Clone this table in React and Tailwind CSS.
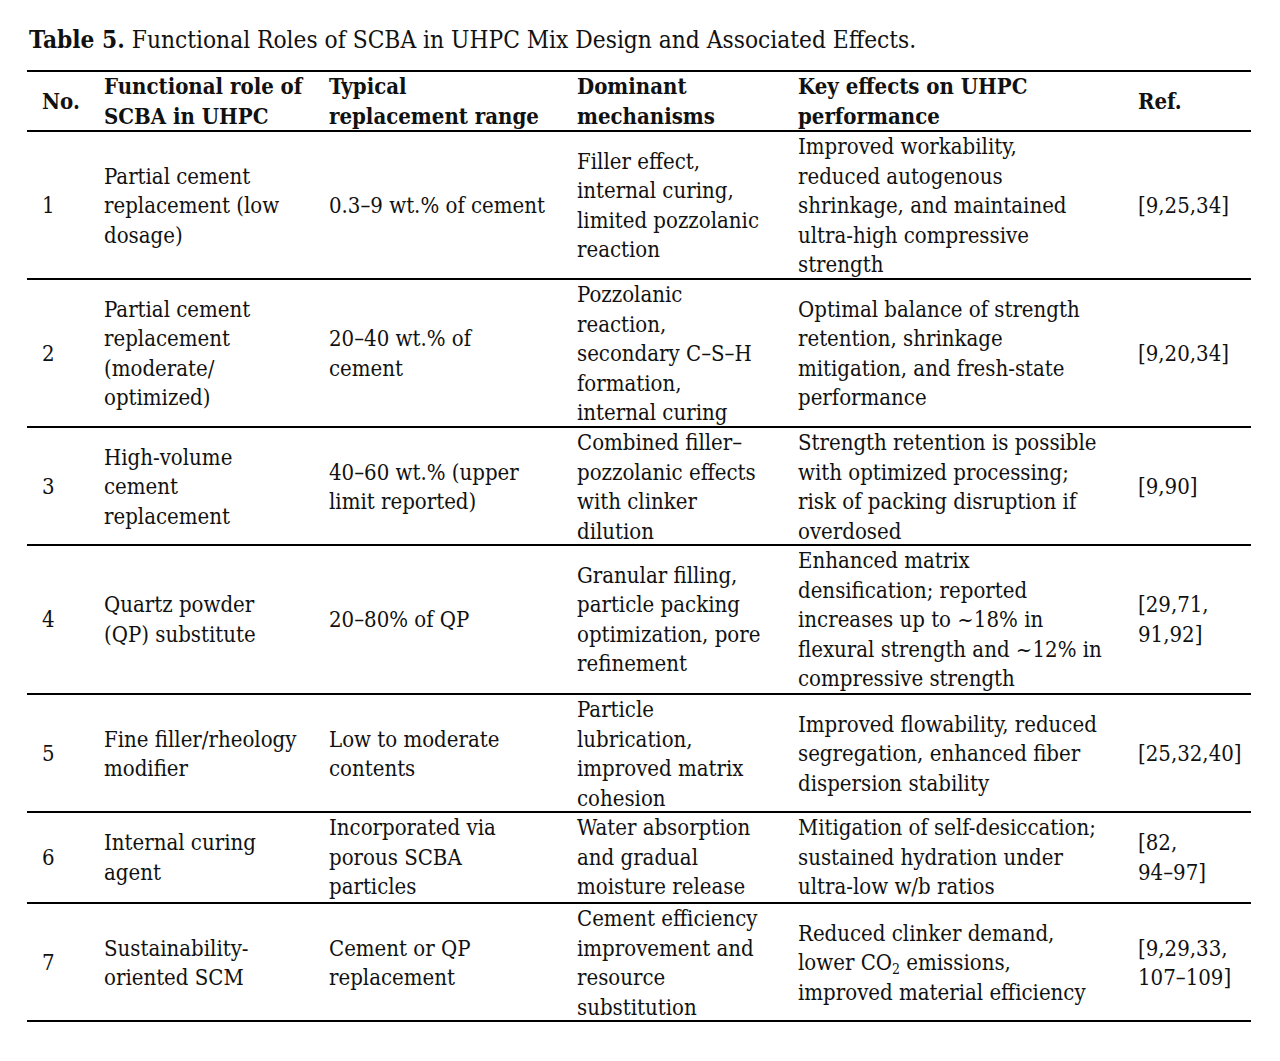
import React from "react";

const cols = "grid grid-cols-[77px_225px_248px_221px_340px_113px]";

const header = [
  ["No."],
  ["Functional role of", "SCBA in UHPC"],
  ["Typical", "replacement range"],
  ["Dominant", "mechanisms"],
  ["Key effects on UHPC", "performance"],
  ["Ref."],
];

const rows = [
  {
    h: "h-[148px]",
    cells: [
      ["1"],
      ["Partial cement", "replacement (low", "dosage)"],
      ["0.3–9 wt.% of cement"],
      ["Filler effect,", "internal curing,", "limited pozzolanic", "reaction"],
      ["Improved workability,", "reduced autogenous", "shrinkage, and maintained", "ultra-high compressive", "strength"],
      ["[9,25,34]"],
    ],
  },
  {
    h: "h-[148px]",
    cells: [
      ["2"],
      ["Partial cement", "replacement", "(moderate/", "optimized)"],
      ["20–40 wt.% of", "cement"],
      ["Pozzolanic", "reaction,", "secondary C–S–H", "formation,", "internal curing"],
      ["Optimal balance of strength", "retention, shrinkage", "mitigation, and fresh-state", "performance"],
      ["[9,20,34]"],
    ],
  },
  {
    h: "h-[118px]",
    cells: [
      ["3"],
      ["High-volume", "cement", "replacement"],
      ["40–60 wt.% (upper", "limit reported)"],
      ["Combined filler–", "pozzolanic effects", "with clinker", "dilution"],
      ["Strength retention is possible", "with optimized processing;", "risk of packing disruption if", "overdosed"],
      ["[9,90]"],
    ],
  },
  {
    h: "h-[149px]",
    cells: [
      ["4"],
      ["Quartz powder", "(QP) substitute"],
      ["20–80% of QP"],
      ["Granular filling,", "particle packing", "optimization, pore", "refinement"],
      ["Enhanced matrix", "densification; reported", "increases up to ~18% in", "flexural strength and ~12% in", "compressive strength"],
      ["[29,71,", "91,92]"],
    ],
  },
  {
    h: "h-[118px]",
    cells: [
      ["5"],
      ["Fine filler/rheology", "modifier"],
      ["Low to moderate", "contents"],
      ["Particle", "lubrication,", "improved matrix", "cohesion"],
      ["Improved flowability, reduced", "segregation, enhanced fiber", "dispersion stability"],
      ["[25,32,40]"],
    ],
  },
  {
    h: "h-[91px]",
    cells: [
      ["6"],
      ["Internal curing", "agent"],
      ["Incorporated via", "porous SCBA", "particles"],
      ["Water absorption", "and gradual", "moisture release"],
      ["Mitigation of self-desiccation;", "sustained hydration under", "ultra-low w/b ratios"],
      ["[82,", "94–97]"],
    ],
  },
  {
    h: "h-[118px]",
    cells: [
      ["7"],
      ["Sustainability-", "oriented SCM"],
      ["Cement or QP", "replacement"],
      ["Cement efficiency", "improvement and", "resource", "substitution"],
      [
        "Reduced clinker demand,",
        <>
          lower CO<sub className="text-[14px] leading-none">2</sub> emissions,
        </>,
        "improved material efficiency",
      ],
      ["[9,29,33,", "107–109]"],
    ],
  },
];

function Cell({ lines, first, bold }) {
  return (
    <div className={`flex items-center ${first ? "pl-[15px]" : ""}`}>
      <div className={bold ? "font-bold" : ""}>
        {lines.map((l, i) => (
          <div key={i} className="whitespace-nowrap">
            {l}
          </div>
        ))}
      </div>
    </div>
  );
}

export default function App() {
  return (
    <div
      className="bg-white min-h-[1061px] px-[27px] pt-[26px] text-[#111]"
      style={{ fontFamily: '"DejaVu Serif", "Liberation Serif", serif' }}
    >
      <div className="h-[44px] text-[24.25px] leading-[28px] pl-[2px] font-stretch-condensed">
        <span className="font-bold">Table 5.</span> Functional Roles of SCBA in UHPC Mix Design and Associated Effects.
      </div>
      <div className="w-[1224px] border-t-2 border-black text-[22px] leading-[29.5px] font-stretch-condensed">
        <div className={`${cols} h-[60px] border-b-2 border-black`}>
          {header.map((c, i) => (
            <Cell key={i} lines={c} first={i === 0} bold />
          ))}
        </div>
        {rows.map((r, ri) => (
          <div key={ri} className={`${cols} ${r.h} border-b-2 border-black`}>
            {r.cells.map((c, i) => (
              <Cell key={i} lines={c} first={i === 0} />
            ))}
          </div>
        ))}
      </div>
    </div>
  );
}
